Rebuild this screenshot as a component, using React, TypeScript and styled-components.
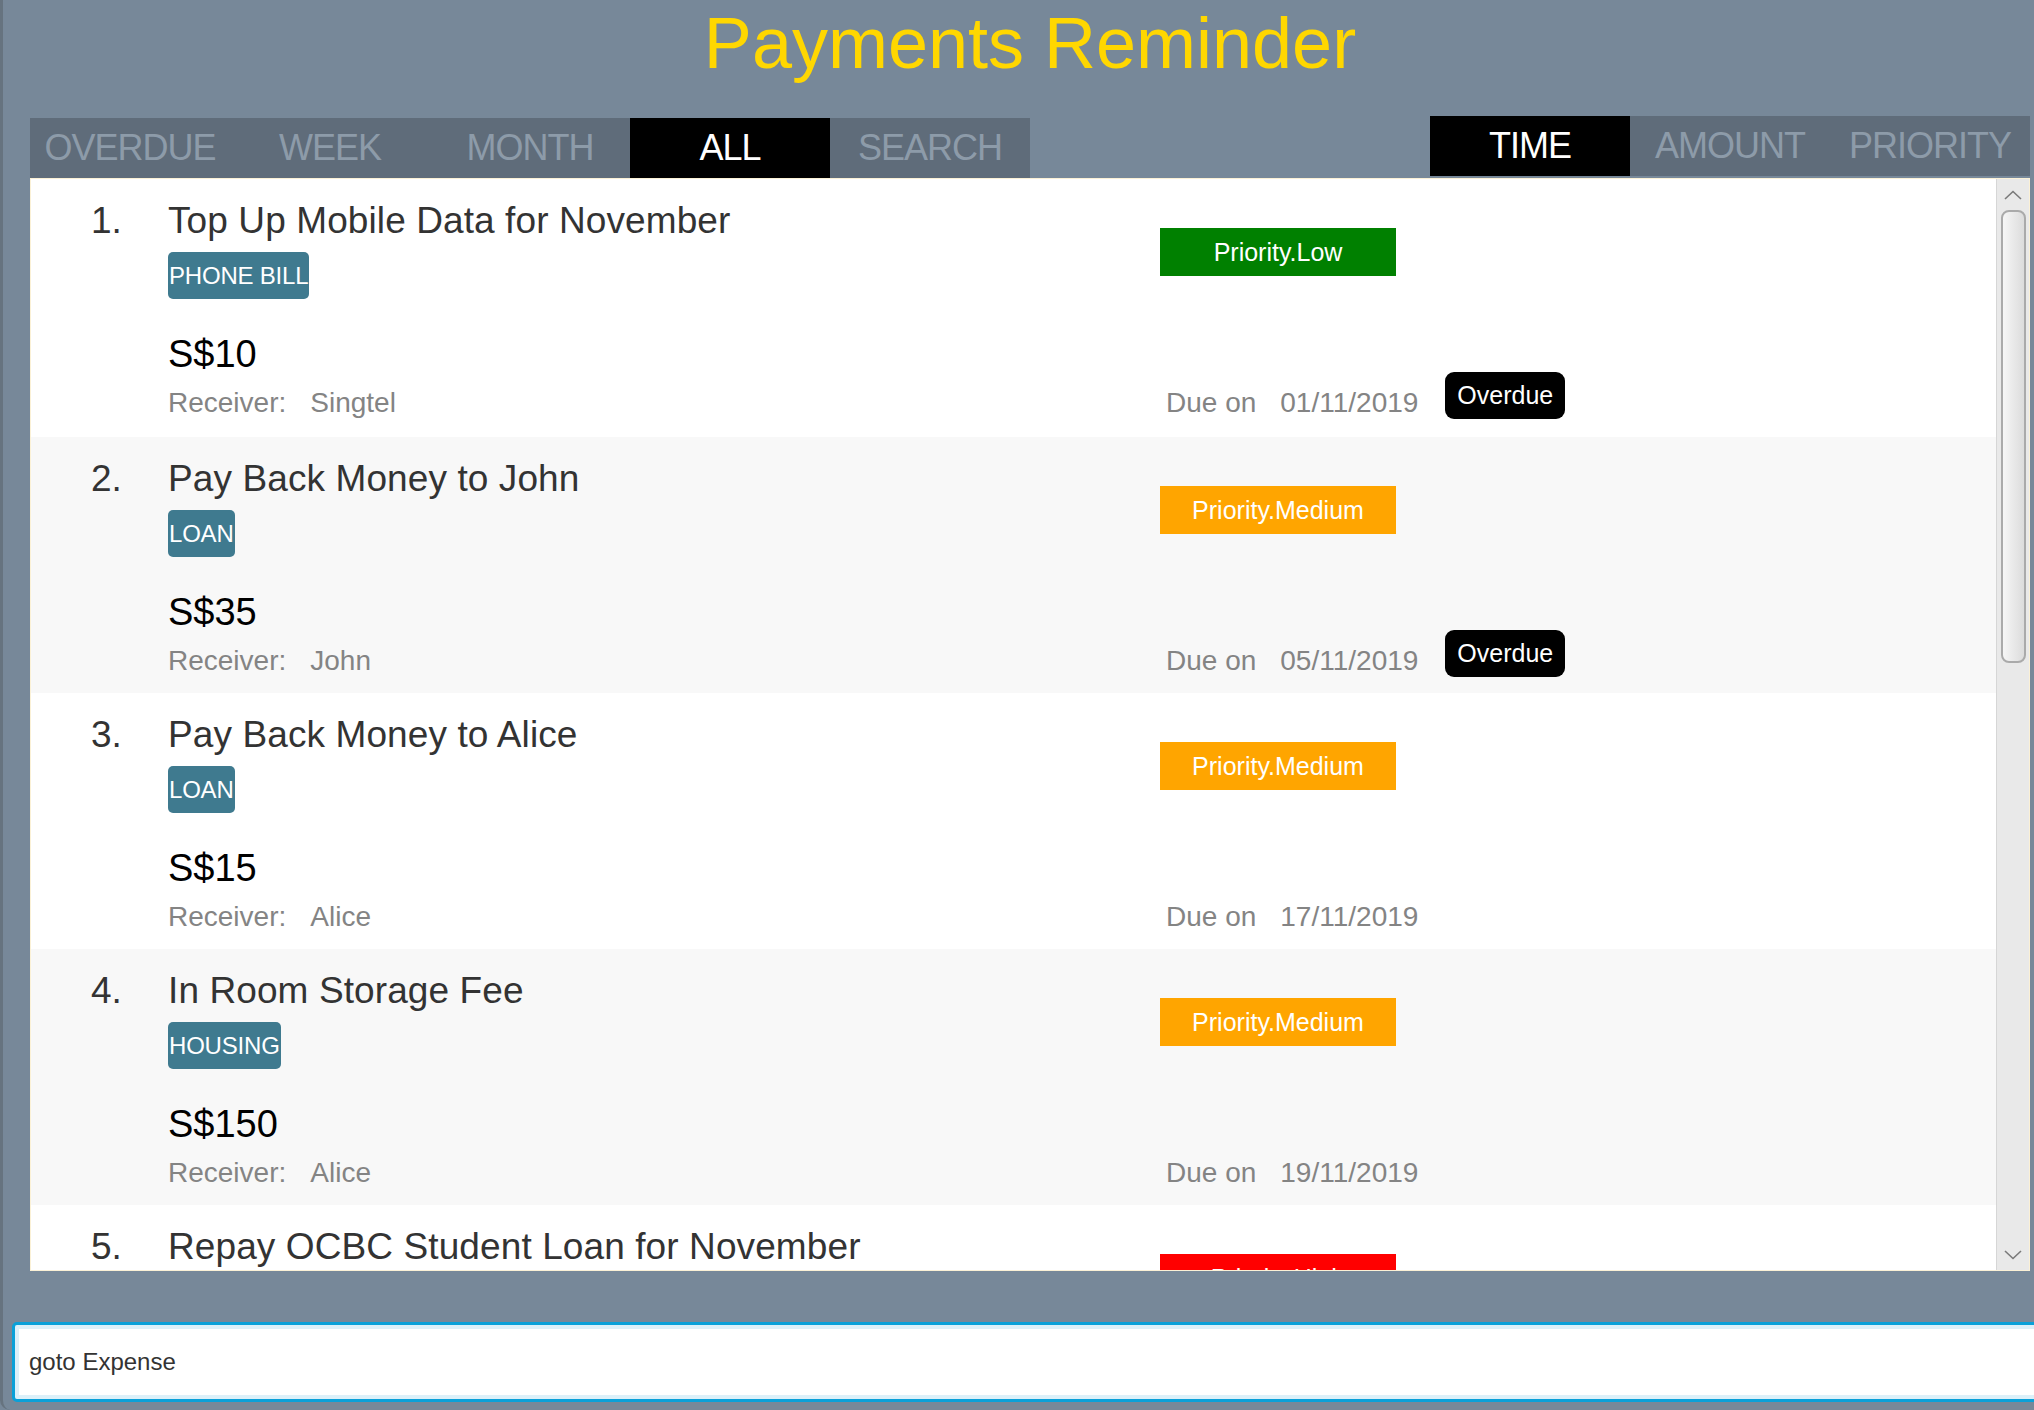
import React from "react";
import styled, { createGlobalStyle } from "styled-components";

const GlobalStyle = createGlobalStyle`
  html, body { margin: 0; padding: 0; background: #778899; }
  body { font-family: "Liberation Sans", Arial, sans-serif; }
  * { box-sizing: border-box; }
`;

const Window = styled.div`
  width: 2034px;
  height: 1410px;
  overflow: hidden;
  background: #778899;
  border-left: 3px solid #66737f;
  border-bottom-left-radius: 10px;
  display: flex;
  flex-direction: column;
`;

const Header = styled.header`
  padding: 0 4px 0 27px;
  display: flex;
  flex-direction: column;
`;

const Title = styled.h1`
  margin: 2px 0 0;
  font-size: 72px;
  line-height: 82px;
  font-weight: 400;
  color: #ffd700;
  text-align: center;
`;

const TabRow = styled.div`
  margin-top: 32px;
  height: 62px;
  display: flex;
  justify-content: space-between;
`;

const TabBar = styled.nav<{ $align: "start" | "end" }>`
  display: flex;
  height: 60px;
  background: #5f6c7a;
  align-self: ${(p) => (p.$align === "start" ? "flex-start" : "flex-end")};
`;

const Tab = styled.div<{ $active?: boolean }>`
  width: 200px;
  height: 100%;
  display: flex;
  align-items: center;
  justify-content: center;
  font-size: 36px;
  letter-spacing: -1px;
  color: ${(p) => (p.$active ? "#ffffff" : "#8d9ba9")};
  background: ${(p) => (p.$active ? "#000000" : "transparent")};
`;

const ListPanel = styled.section`
  margin: 0 4px 0 27px;
  height: 1093px;
  border: 1px solid #fbf1d6;
  background: #ffffff;
  display: flex;
  overflow: hidden;
`;

const ListBody = styled.div`
  flex: 1;
  overflow: hidden;
  display: flex;
  flex-direction: column;
`;

const Row = styled.article<{ $alt: boolean; $first: boolean }>`
  flex: none;
  height: ${(p) => (p.$first ? 258 : 256)}px;
  background: ${(p) => (p.$alt ? "#f8f8f8" : "#ffffff")};
  display: grid;
  grid-template-columns: 77px 992px 1fr;
  padding-left: 60px;
`;

const Index = styled.div`
  padding-top: 20px;
  font-size: 37px;
  line-height: 44px;
  color: #333333;
`;

const MainCol = styled.div`
  padding-top: 20px;
  display: flex;
  flex-direction: column;
  align-items: flex-start;
`;

const ItemTitle = styled.div`
  font-size: 37px;
  line-height: 44px;
  letter-spacing: 0.1px;
  color: #333333;
  white-space: nowrap;
`;

const Tag = styled.span`
  margin-top: 9px;
  height: 47px;
  padding: 0 1px;
  display: inline-flex;
  align-items: center;
  background: #3f7a8f;
  border-radius: 5px;
  color: #ffffff;
  font-size: 24px;
  letter-spacing: -0.2px;
  white-space: nowrap;
`;

const Amount = styled.div`
  margin-top: 32px;
  font-size: 38px;
  line-height: 46px;
  color: #000000;
`;

const InfoLine = styled.div<{ $indent?: number }>`
  display: flex;
  align-items: flex-end;
  gap: 24px;
  padding-left: ${(p) => p.$indent ?? 0}px;
`;

const Muted = styled.span`
  font-size: 28px;
  line-height: 34px;
  color: #848484;
  white-space: nowrap;
`;

const ReceiverLine = styled(InfoLine)`
  margin-top: 9px;
`;

const SideCol = styled.div`
  padding-top: 49px;
  display: flex;
  flex-direction: column;
  align-items: flex-start;
`;

const PriorityBadge = styled.div<{ $color: string }>`
  width: 236px;
  height: 48px;
  display: flex;
  align-items: center;
  justify-content: center;
  background: ${(p) => p.$color};
  color: #ffffff;
  font-size: 25px;
`;

const DueLine = styled(InfoLine)`
  margin-top: 96px;
  height: 48px;
`;

const OverdueBadge = styled.span`
  height: 47px;
  margin-bottom: 1px;
  margin-left: 3px;
  padding: 0 12px;
  display: inline-flex;
  align-items: center;
  background: #000000;
  color: #ffffff;
  border-radius: 9px;
  font-size: 25px;
`;

const ScrollBar = styled.div`
  width: 33px;
  flex: none;
  background: #e9e9e9;
  border-left: 1px solid #d6d6d6;
  display: flex;
  flex-direction: column;
  align-items: center;
`;

const ScrollButton = styled.div<{ $h: number }>`
  height: ${(p) => p.$h}px;
  width: 100%;
  flex: none;
  display: flex;
  align-items: center;
  justify-content: center;
`;

const Track = styled.div`
  flex: 1;
  width: 100%;
  display: flex;
  justify-content: center;
`;

const Thumb = styled.div`
  width: 25px;
  height: 453px;
  border: 2px solid #aaaaaa;
  border-radius: 8px;
  background: linear-gradient(to right, #f6f6f6, #dcdcdc);
`;

const CommandBox = styled.input`
  margin: 51px 0 0 9px;
  width: calc(100% + 20px);
  height: 80px;
  flex: none;
  border: 3px solid #0aa0d8;
  border-radius: 5px;
  box-shadow: inset 0 0 0 4px #dcf0f9;
  background: #ffffff;
  padding: 0 0 0 14px;
  font-family: "Liberation Sans", Arial, sans-serif;
  font-size: 24px;
  color: #333333;
  outline: none;
`;

type Payment = {
  title: string;
  tag: string;
  amount: string;
  receiver: string;
  priority: "Low" | "Medium" | "High";
  due: string;
  overdue: boolean;
};

const payments: Payment[] = [
  { title: "Top Up Mobile Data for November", tag: "PHONE BILL", amount: "S$10", receiver: "Singtel", priority: "Low", due: "01/11/2019", overdue: true },
  { title: "Pay Back Money to John", tag: "LOAN", amount: "S$35", receiver: "John", priority: "Medium", due: "05/11/2019", overdue: true },
  { title: "Pay Back Money to Alice", tag: "LOAN", amount: "S$15", receiver: "Alice", priority: "Medium", due: "17/11/2019", overdue: false },
  { title: "In Room Storage Fee", tag: "HOUSING", amount: "S$150", receiver: "Alice", priority: "Medium", due: "19/11/2019", overdue: false },
  { title: "Repay OCBC Student Loan for November", tag: "LOAN", amount: "S$200", receiver: "OCBC", priority: "High", due: "30/11/2019", overdue: false },
];

const priorityColor = { Low: "#008000", Medium: "#ffa500", High: "#ff0000" };

const Chevron = ({ up }: { up: boolean }) => (
  <svg width="18" height="10" viewBox="0 0 18 10">
    <polyline
      points={up ? "1,9 9,1.5 17,9" : "1,1 9,8.5 17,1"}
      fill="none"
      stroke="#7a7a7a"
      strokeWidth="1.6"
    />
  </svg>
);

export default function App() {
  return (
    <>
      <GlobalStyle />
      <Window>
        <Header>
          <Title>Payments Reminder</Title>
          <TabRow>
            <TabBar $align="end">
              <Tab>OVERDUE</Tab>
              <Tab>WEEK</Tab>
              <Tab>MONTH</Tab>
              <Tab $active>ALL</Tab>
              <Tab>SEARCH</Tab>
            </TabBar>
            <TabBar $align="start">
              <Tab $active>TIME</Tab>
              <Tab>AMOUNT</Tab>
              <Tab>PRIORITY</Tab>
            </TabBar>
          </TabRow>
        </Header>
        <ListPanel>
          <ListBody>
            {payments.map((p, i) => (
              <Row key={i} $alt={i % 2 === 1} $first={i === 0}>
                <Index>{i + 1}.</Index>
                <MainCol>
                  <ItemTitle>{p.title}</ItemTitle>
                  <Tag>{p.tag}</Tag>
                  <Amount>{p.amount}</Amount>
                  <ReceiverLine>
                    <Muted>Receiver:</Muted>
                    <Muted>{p.receiver}</Muted>
                  </ReceiverLine>
                </MainCol>
                <SideCol>
                  <PriorityBadge $color={priorityColor[p.priority]}>
                    Priority.{p.priority}
                  </PriorityBadge>
                  <DueLine $indent={6}>
                    <Muted>Due on</Muted>
                    <Muted>{p.due}</Muted>
                    {p.overdue && <OverdueBadge>Overdue</OverdueBadge>}
                  </DueLine>
                </SideCol>
              </Row>
            ))}
          </ListBody>
          <ScrollBar>
            <ScrollButton $h={31}>
              <Chevron up />
            </ScrollButton>
            <Track>
              <Thumb />
            </Track>
            <ScrollButton $h={30}>
              <Chevron up={false} />
            </ScrollButton>
          </ScrollBar>
        </ListPanel>
        <CommandBox readOnly defaultValue="goto Expense" />
      </Window>
    </>
  );
}
